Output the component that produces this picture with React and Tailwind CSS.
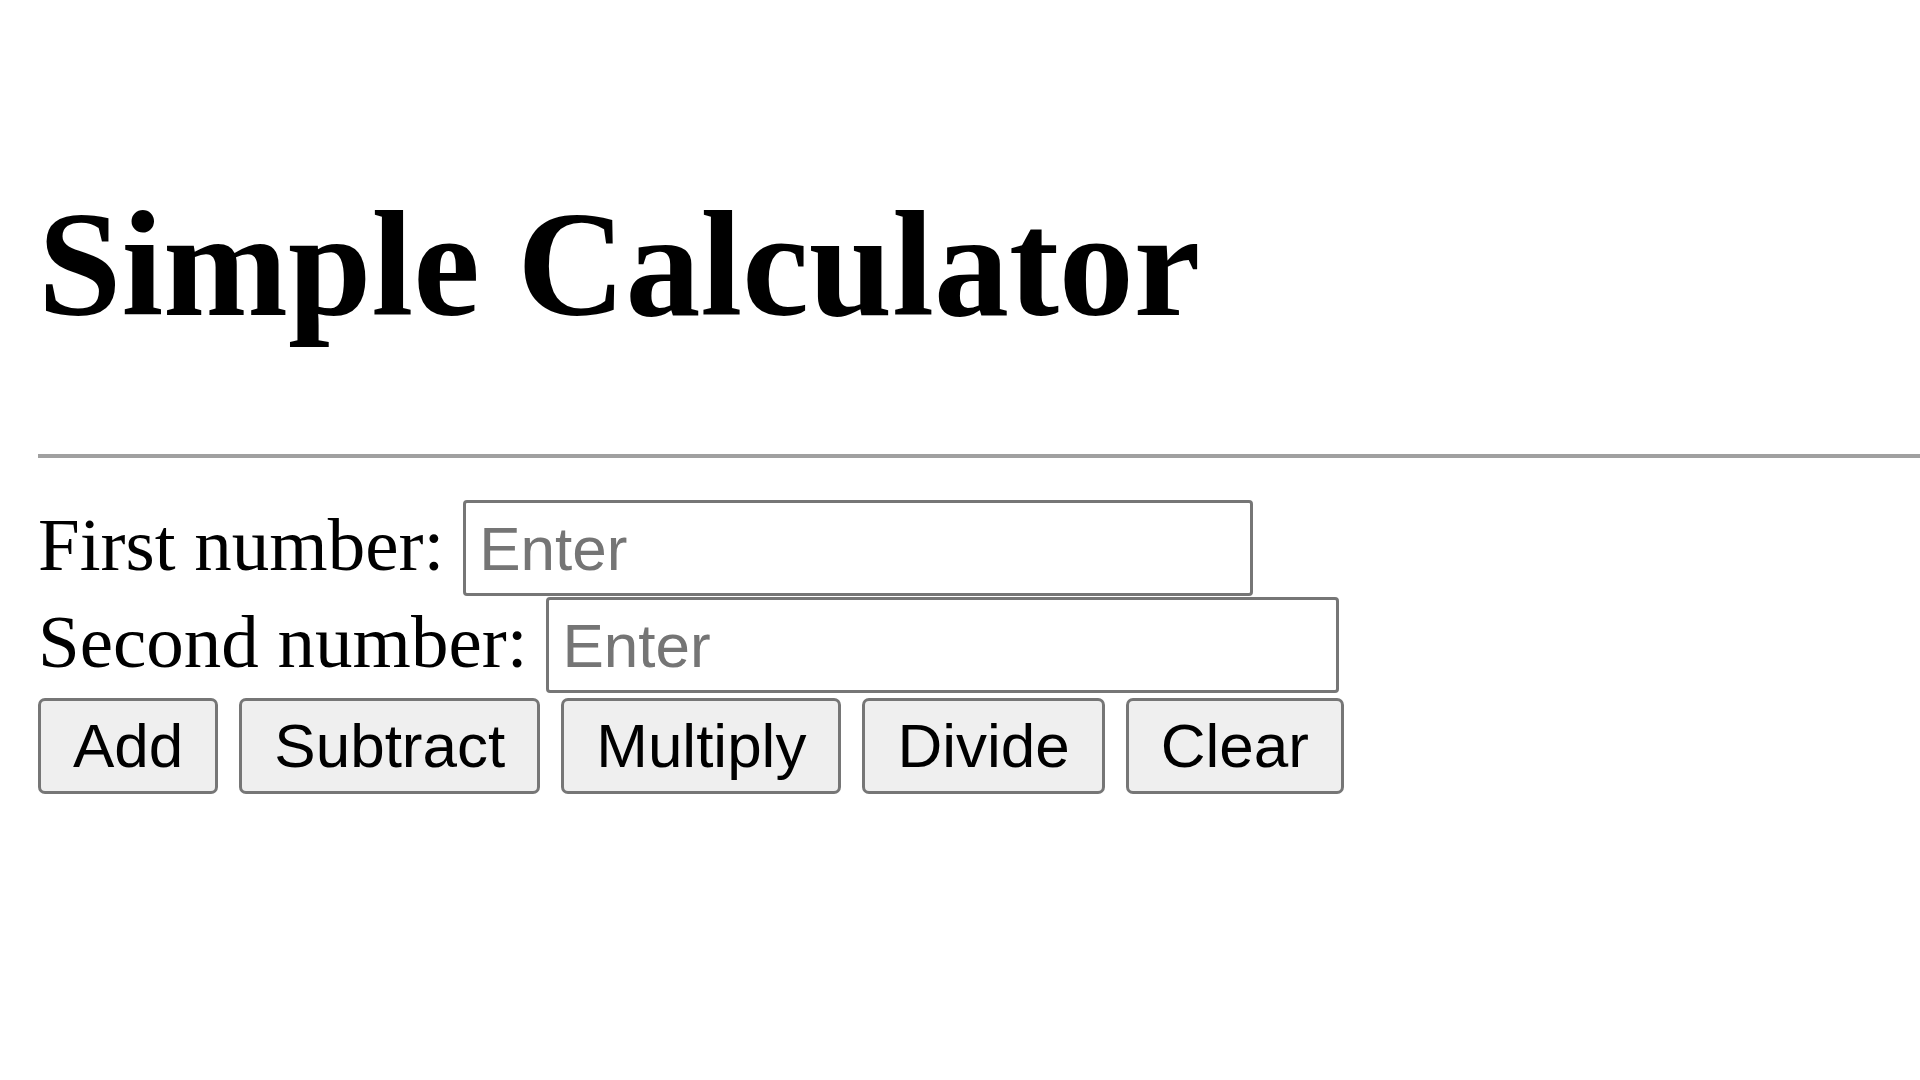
import React from "react";

export default function App() {
  const buttons = ["Add", "Subtract", "Multiply", "Divide", "Clear"];
  return (
    <div className="min-h-screen w-full overflow-hidden bg-white pl-[38px] text-black font-['Liberation_Serif','Times_New_Roman',serif]">
      <h1 className="m-0 pt-[178px] text-[150px] font-bold leading-[172px] whitespace-nowrap">
        Simple Calculator
      </h1>
      <div className="mt-[104px] h-[4px] w-full bg-[#a0a0a0]" />
      <div className="mt-[42px] flex flex-col">
        <div className="flex items-baseline gap-[19px]">
          <label className="text-[75px] leading-none whitespace-nowrap">First number:</label>
          <input
            type="text"
            placeholder="Enter"
            className="h-[96px] w-[790px] rounded-[4px] border-[3px] border-[#767676] bg-white pl-[13px] pr-[8px] text-[62px] font-['Liberation_Sans',Arial,sans-serif] text-black outline-none placeholder:text-[#757575]"
          />
        </div>
        <div className="mt-[1px] flex items-baseline gap-[19px]">
          <label className="text-[75px] leading-none whitespace-nowrap">Second number:</label>
          <input
            type="text"
            placeholder="Enter"
            className="h-[96px] w-[793px] rounded-[4px] border-[3px] border-[#767676] bg-white pl-[13px] pr-[8px] text-[62px] font-['Liberation_Sans',Arial,sans-serif] text-black outline-none placeholder:text-[#757575]"
          />
        </div>
        <div className="mt-[5px] flex gap-[21px]">
          {buttons.map((b) => (
            <button
              key={b}
              type="button"
              className="h-[96px] rounded-[7px] border-[3px] border-[#767676] bg-[#efefef] px-[32px] text-[62px] leading-none text-black font-['Liberation_Sans',Arial,sans-serif]"
            >
              {b}
            </button>
          ))}
        </div>
      </div>
    </div>
  );
}
